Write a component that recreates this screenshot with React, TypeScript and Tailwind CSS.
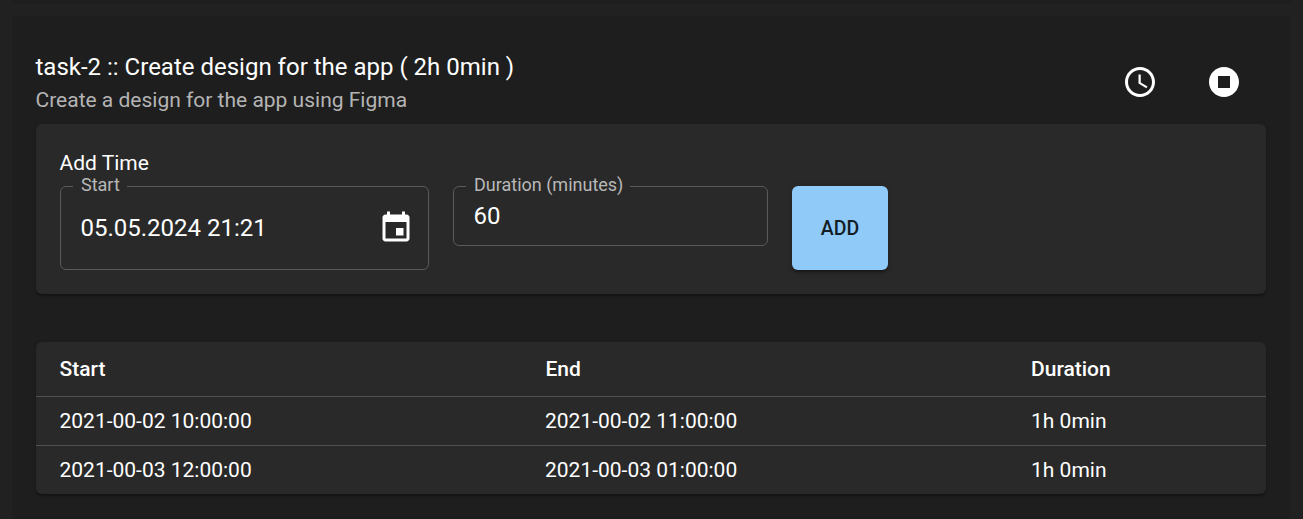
import type { ReactNode } from "react";

const entries = [
  { start: "2021-00-02 10:00:00", end: "2021-00-02 11:00:00", duration: "1h 0min" },
  { start: "2021-00-03 12:00:00", end: "2021-00-03 01:00:00", duration: "1h 0min" },
];

function Icon({ d }: { d: string }) {
  return (
    <svg viewBox="0 0 24 24" className="block size-9 shrink-0 fill-white" aria-hidden="true">
      <path d={d} />
    </svg>
  );
}

const CLOCK =
  "M11.99 2C6.47 2 2 6.48 2 12s4.47 10 9.99 10C17.52 22 22 17.52 22 12S17.52 2 11.99 2zM12 20c-4.42 0-8-3.58-8-8s3.58-8 8-8 8 3.58 8 8-3.58 8-8 8zm.5-13H11v6l5.25 3.15.75-1.23-4.5-2.67z";
const STOP =
  "M12 2C6.48 2 2 6.48 2 12s4.48 10 10 10 10-4.48 10-10S17.52 2 12 2zm4 14H8V8h8v8z";
const EVENT =
  "M17 12h-5v5h5v-5zM16 1v2H8V1H6v2H5c-1.11 0-1.99.9-1.99 2L3 19c0 1.1.89 2 2 2h14c1.1 0 2-.9 2-2V5c0-1.1-.9-2-2-2h-1V1h-2zm3 18H5V8h14v11z";

function Field({ label, className, children }: { label: string; className: string; children: ReactNode }) {
  return (
    <fieldset className={`rounded-[6px] border border-[#5a5a5a] pl-3 ${className}`}>
      <legend className="h-0 pr-[7px] pl-2 text-[18px] leading-[0px] text-[#b8b8b8]">
        <span className="relative -top-[2px]">{label}</span>
      </legend>
      {children}
    </fieldset>
  );
}

const panel =
  "rounded-[6px] bg-[#292929] shadow-[0px_3px_2px_-2px_rgba(0,0,0,0.2),0px_1.5px_1.5px_0px_rgba(0,0,0,0.14),0px_1.5px_4px_0px_rgba(0,0,0,0.12)]";

export default function App() {
  return (
    <div className="flex h-[519px] w-full flex-col overflow-hidden bg-[#212121] px-3 font-[Roboto,sans-serif] text-white">
      <div className="mb-3 h-1 shrink-0 bg-[#1e1e1e]" />
      <section className="mr-px h-[503px] shrink-0 bg-[#1e1e1e] px-6 pt-[33px]">
        <header className="flex h-[66px] items-center justify-between">
          <div>
            <h1 className="-ml-[0.5px] text-[24px] leading-9">
              task-2 :: Create design for the app ( 2h 0min )
            </h1>
            <p className="-ml-[0.5px] text-[21px] leading-[30px] text-[#b4b4b4]">
              Create a design for the app using Figma
            </p>
          </div>
          <div className="mr-6 flex gap-12">
            <button aria-label="Log time"><Icon d={CLOCK} /></button>
            <button aria-label="Stop"><Icon d={STOP} /></button>
          </div>
        </header>

        <div className={`mt-[9px] h-[170px] px-6 pt-6 ${panel}`}>
          <h2 className="-ml-[0.5px] text-[21px] leading-[30px]">Add Time</h2>
          <div className="mt-2 flex items-start gap-6">
            <Field label="Start" className="h-[84px] w-[369px]">
              <div className="flex h-[82px] items-center justify-between pr-[14px] pl-[7.5px]">
                <span className="text-[24px] leading-9">05.05.2024 21:21</span>
                <Icon d={EVENT} />
              </div>
            </Field>
            <Field label="Duration (minutes)" className="h-[60px] w-[315px]">
              <div className="flex h-[58px] items-center pl-[7.5px] text-[24px] leading-9">60</div>
            </Field>
            <button className="h-[84px] w-24 rounded-[6px] bg-[#90caf9] pt-[2px] text-[19.5px] leading-[34px] font-medium tracking-[0.1px] text-[#121d25] shadow-[0px_4.5px_1.5px_-3px_rgba(0,0,0,0.2),0px_3px_3px_0px_rgba(0,0,0,0.14),0px_1.5px_7.5px_0px_rgba(0,0,0,0.12)]">
              ADD
            </button>
          </div>
        </div>

        <div className={`mt-12 h-[152px] overflow-hidden ${panel}`}>
          <table className="w-full table-fixed border-collapse text-left text-[21px] leading-[30px]">
            <colgroup>
              <col className="w-[486px]" />
              <col className="w-[486px]" />
              <col />
            </colgroup>
            <thead>
              <tr className="h-[54px] border-b border-[#515151]">
                {["Start", "End", "Duration"].map((name) => (
                  <th key={name} className="p-0 pl-[23.5px] font-medium last:pl-[23px]">{name}</th>
                ))}
              </tr>
            </thead>
            <tbody>
              {entries.map((entry) => (
                <tr key={entry.start} className="h-[49px] border-b border-[#515151] last:border-b-0">
                  <td className="p-0 pl-[23.5px]">{entry.start}</td>
                  <td className="p-0 pl-[23px]">{entry.end}</td>
                  <td className="p-0 pl-[23px]">{entry.duration}</td>
                </tr>
              ))}
            </tbody>
          </table>
        </div>
      </section>
    </div>
  );
}
